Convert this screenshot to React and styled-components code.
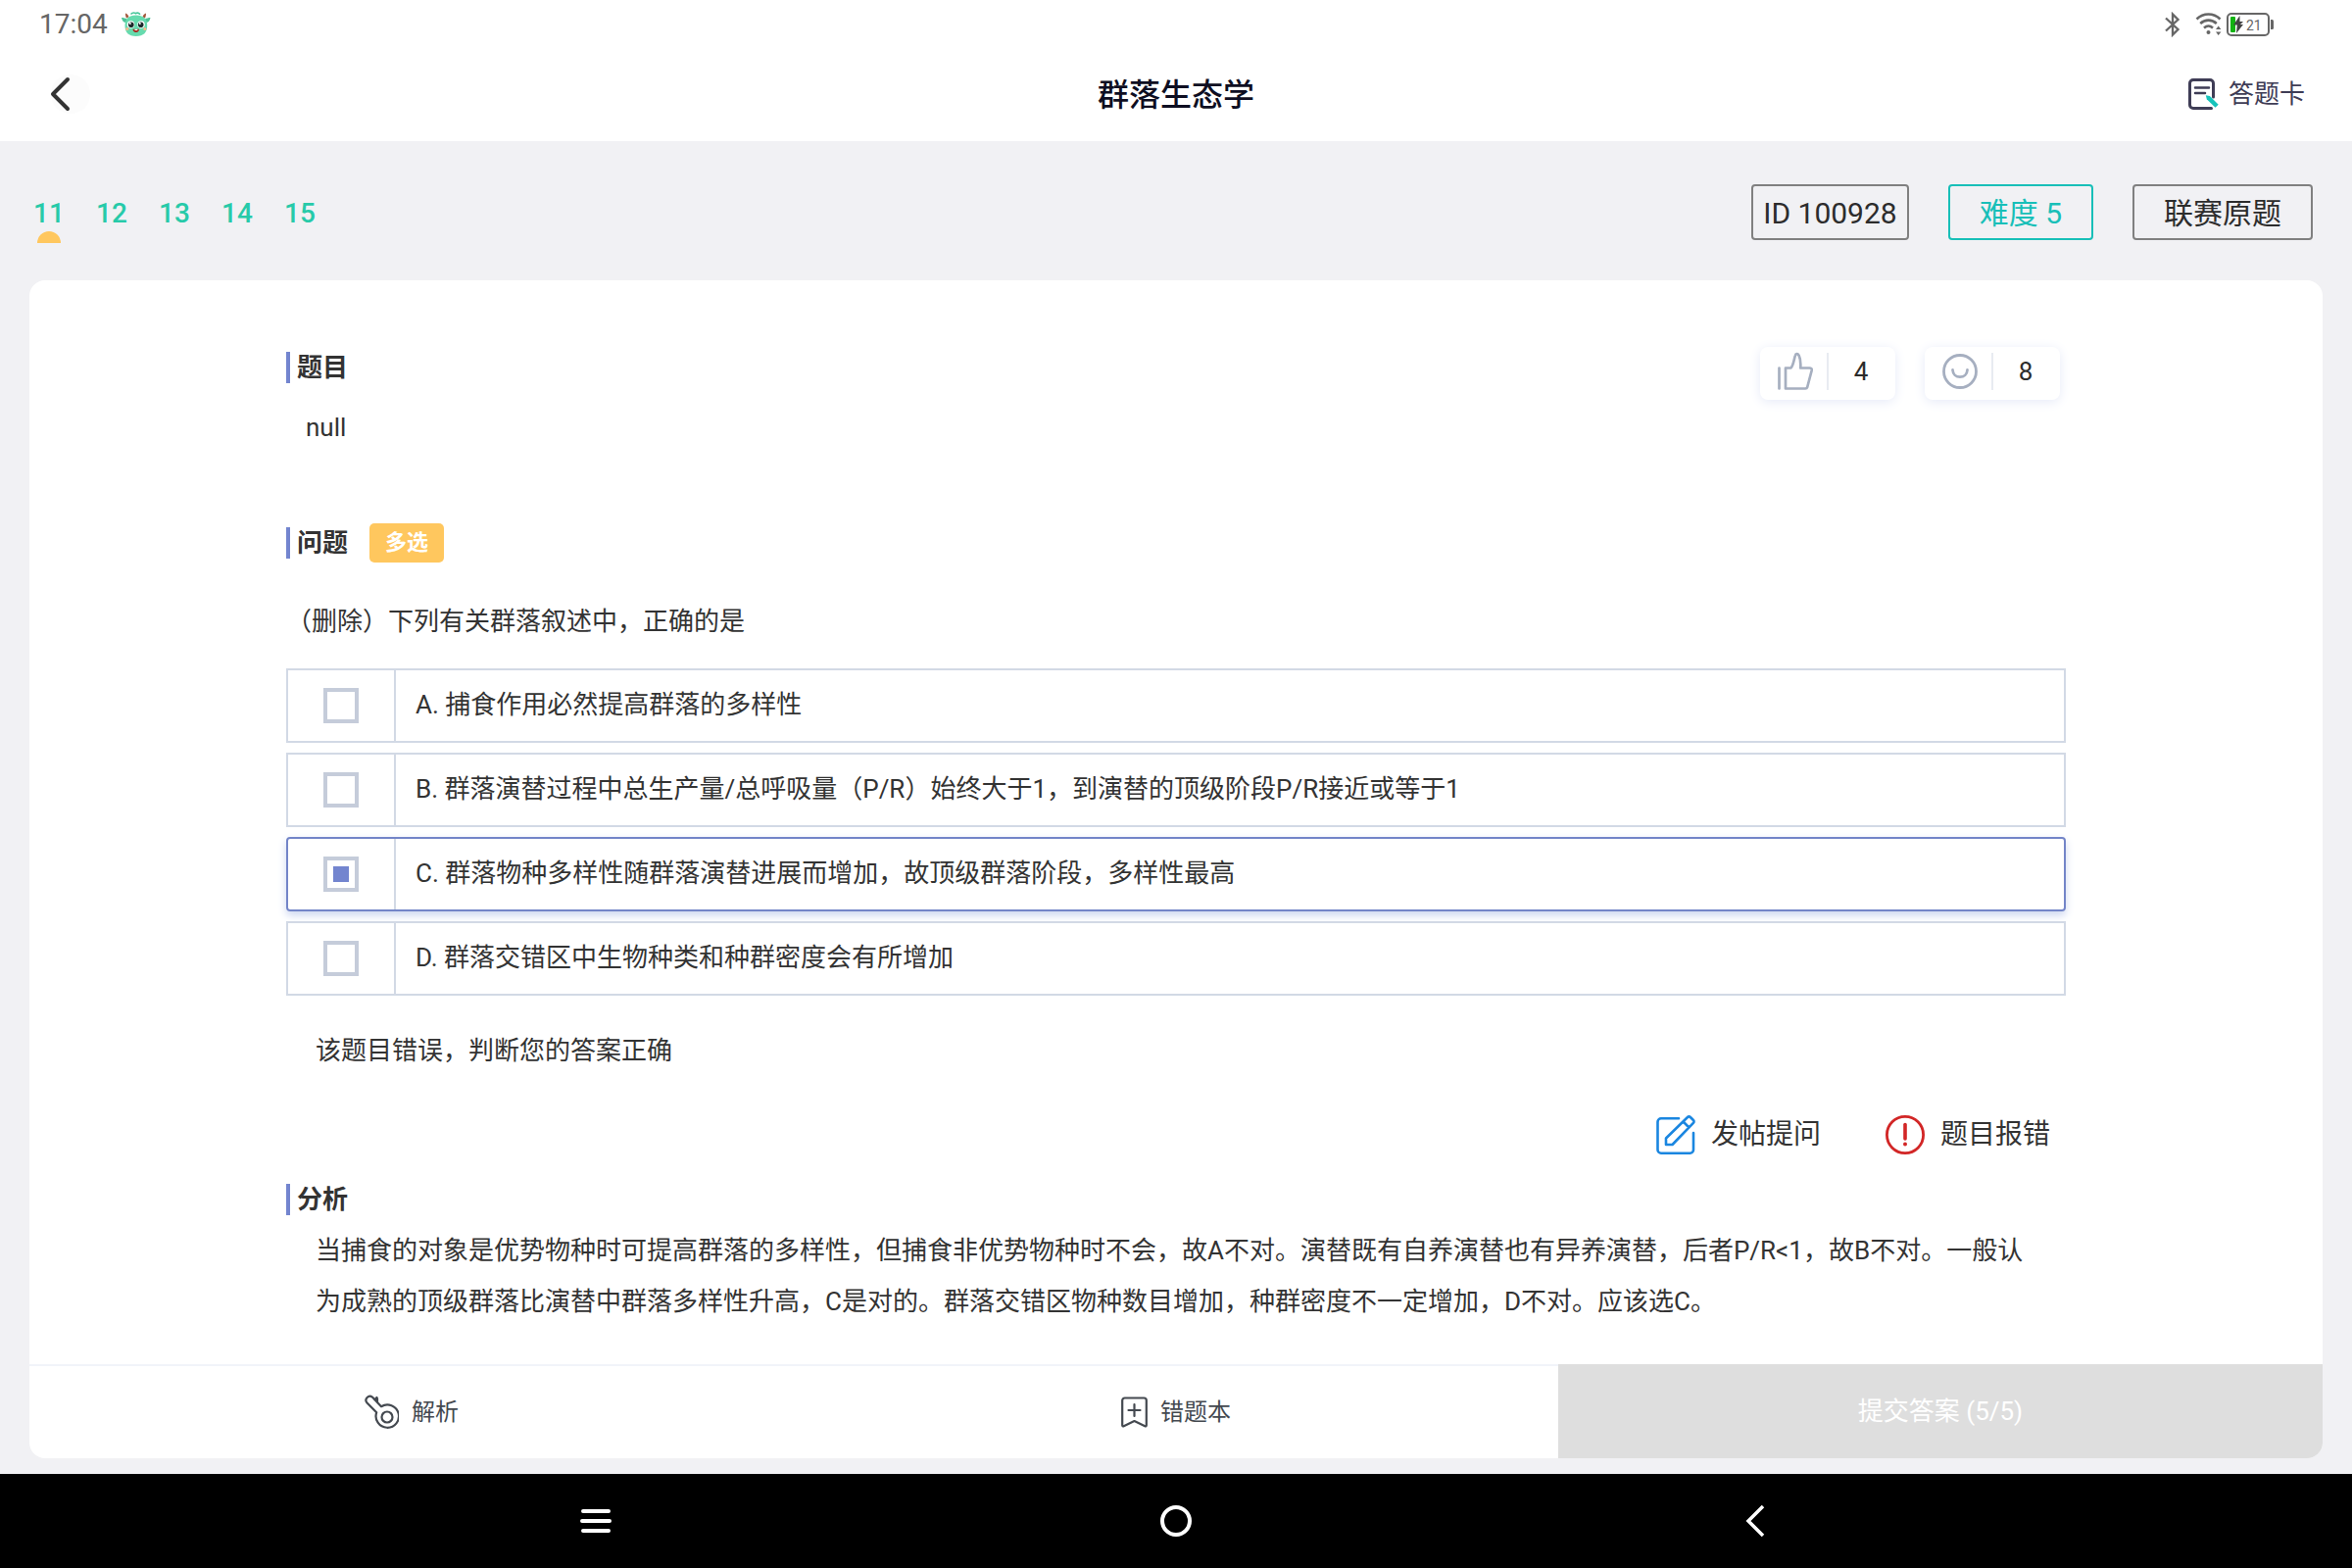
import React, { useState } from "react";
import styled, { createGlobalStyle } from "styled-components";

const GlobalStyle = createGlobalStyle`
  * {
    box-sizing: border-box;
  }
  body {
    margin: 0;
    color: #333333;
    background: #f1f1f4;
    font-family: Roboto, "Noto Sans CJK SC", sans-serif;
    font-size: 26px;
    line-height: 32px;
  }
  button {
    padding: 0;
    border: 0;
    background: none;
    color: inherit;
    font: inherit;
    cursor: pointer;
  }
  h1, h2, p {
    margin: 0;
    padding: 0;
  }
  svg {
    display: block;
    flex-shrink: 0;
  }
`;

const Page = styled.div`
  display: flex;
  flex-direction: column;
  min-height: 100vh;
`;
const StatusBar = styled.div`
  display: flex;
  align-items: center;
  justify-content: space-between;
  height: 48px;
  padding: 2px 80px 0 40px;
  background: #ffffff;
  color: #666666;
`;
const StatusGroup = styled.div`
  display: flex;
  align-items: center;
  gap: ${(props) => props.$gap};
`;
const Clock = styled.span`
  font-size: 28px;
`;
const Header = styled.header`
  display: grid;
  grid-template-columns: 1fr auto 1fr;
  align-items: center;
  height: 96px;
  padding: 0 48px;
  background: #ffffff;
`;
const BackBtn = styled.button`
  justify-self: start;
`;
const Title = styled.h1`
  padding-top: 2px;
  color: #0e0e22;
  font-size: 32px;
  font-weight: 500;
`;
const AnswerCardBtn = styled.button`
  display: flex;
  align-items: center;
  justify-self: end;
  gap: 8px;
  color: #3f3d56;
`;
const TopRow = styled.div`
  display: flex;
  align-items: center;
  justify-content: space-between;
  height: 142px;
  padding: 2px 40px 0 18px;
`;
const NumberNav = styled.nav`
  display: flex;
`;
const NumberBtn = styled.button`
  display: flex;
  flex-direction: column;
  align-items: center;
  width: 64px;
  height: 64px;
  padding-top: 18px;
  color: #27caa9;
  font-size: 28px;
  font-weight: 500;
  &::after {
    content: "";
    width: 24px;
    height: 12px;
    margin-top: 2px;
    border-radius: 12px 12px 0 0;
    background: ${(props) => (props.$active ? "#ffc75e" : "transparent")};
  }
`;
const TagList = styled.div`
  display: flex;
  gap: 40px;
`;
const Tag = styled.span`
  padding: 11px ${(props) => (props.$narrow ? "10px" : "30px")} 8px;
  border: 2px solid ${(props) => (props.$accent ? "#18bfb8" : "#808080")};
  border-radius: 4px;
  color: ${(props) => (props.$accent ? "#18bfb8" : "#2c2c2c")};
  font-size: 30px;
  line-height: 34px;
`;
const Card = styled.main`
  display: flex;
  flex: 1;
  flex-direction: column;
  margin: 0 30px 16px;
  border-radius: 16px;
  background: #ffffff;
  overflow: hidden;
`;
const Content = styled.div`
  flex: 1;
  padding: 68px 262px 0;
`;
const TopicHead = styled.div`
  display: flex;
  align-items: flex-start;
  justify-content: space-between;
  height: 54px;
  padding-right: 6px;
`;
const SectionHead = styled.div`
  display: flex;
  align-items: center;
  gap: 22px;
  margin-top: ${(props) => props.$top};
`;
const SectionTitle = styled.h2`
  padding-left: 7px;
  border-left: 4px solid #7385cf;
  font-size: 26px;
  font-weight: 700;
  line-height: 32px;
`;
const Feedback = styled.div`
  display: flex;
  gap: 30px;
`;
const FeedbackBtn = styled.button`
  display: flex;
  align-items: center;
  width: 138px;
  height: 54px;
  padding: 0 2px 4px 18px;
  border-radius: 8px;
  background: #ffffff;
  box-shadow: 0 2px 12px #e6eaf8;
  color: #2c2c2c;
`;
const FeedbackCount = styled.span`
  flex: 1;
  margin-left: 14px;
  border-left: 2px solid #e8ebf1;
  line-height: 38px;
`;
const TopicText = styled.p`
  padding: 12px 20px 0;
`;
const MultiBadge = styled.span`
  height: 40px;
  padding: 0 16px;
  border-radius: 5px;
  background: #ffc75e;
  color: #ffffff;
  font-size: 22px;
  font-weight: 700;
  line-height: 40px;
`;
const Question = styled.p`
  margin-top: 44px;
`;
const OptionList = styled.div`
  display: flex;
  flex-direction: column;
  gap: 10px;
  margin-top: 32px;
`;
const Option = styled.label`
  display: flex;
  align-items: center;
  height: 76px;
  border: 2px solid ${(props) => (props.$checked ? "#7385c8" : "#d2d9e5")};
  border-radius: ${(props) => (props.$checked ? "4px" : "0")};
  box-shadow: ${(props) => (props.$checked ? "0 4px 8px #ccd6f0" : "none")};
  cursor: pointer;
`;
const CheckCell = styled.span`
  display: flex;
  align-items: center;
  justify-content: center;
  width: 110px;
  height: 100%;
  border-right: 2px solid #d2d9e5;
`;
const Checkbox = styled.input`
  display: grid;
  place-content: center;
  width: 36px;
  height: 36px;
  margin: 0;
  border: 4px solid #c5ccda;
  background: #ffffff;
  appearance: none;
  cursor: pointer;
  &:checked::before {
    content: "";
    width: 16px;
    height: 16px;
    background: #7385cf;
  }
`;
const OptionText = styled.span`
  padding: 0 20px 2px;
`;
const ResultText = styled.p`
  margin-top: 40px;
  padding: 0 30px;
`;
const ActionRow = styled.div`
  display: flex;
  justify-content: flex-end;
  gap: 66px;
  margin-top: 50px;
  padding-right: 16px;
`;
const ActionBtn = styled.button`
  display: flex;
  align-items: center;
  gap: 16px;
  font-size: 28px;
`;
const Analysis = styled.p`
  padding: 10px 30px 0;
  line-height: 52px;
`;
const BottomBar = styled.div`
  display: grid;
  grid-template-columns: repeat(3, 1fr);
  height: 96px;
`;
const BottomBtn = styled.button`
  display: flex;
  align-items: center;
  justify-content: center;
  gap: 13px;
  border-top: 2px solid #f1f4f9;
  color: #444950;
  font-size: 24px;
`;
const SubmitBtn = styled.button`
  background: #dedede;
  color: #ffffff;
`;
const SystemNav = styled.nav`
  display: grid;
  grid-template-columns: repeat(3, 1fr);
  height: 96px;
  padding: 0 13%;
  background: #000000;
`;
const SystemBtn = styled.button`
  display: flex;
  align-items: center;
  justify-content: center;
`;

const MascotIcon = () => (
  <svg width="30" height="26" viewBox="0 0 30 26">
    <path d="M4 1.500c1.500.5 2.800 1.700 3.500 3.700L5 6.500C4.200 5 4 3.200 4 1.500zM25 1.500c-1.500.5-2.800 1.700-3.500 3.700L24 6.500c.8-1.500 1-3.300 1-5z" fill="#a3573a" />
    <path d="M0 6c2 0 4 .5 5.500 1.500L5 11C2 11 .5 9 0 6zM29.500 6c-2 0-4 .5-5.500 1.500l.5 3.500c3 0 4.500-2 5-5z" fill="#4fc498" />
    <path d="M14.800 3.500C7.500 3.500 3.500 7.500 3.500 14c0 7 3.500 11 11.300 11S26.200 21 26.200 14c0-6.500-4-10.500-11.400-10.500z" fill="#66dbae" />
    <path d="M9.500 2.500c2-2.200 3.500-1.800 5-.8 1.500-1 3-.8 4.500 1" fill="none" stroke="#43c698" strokeWidth="1.600" />
    <circle cx="9.500" cy="13" r="3.800" fill="#fff" />
    <circle cx="20" cy="13" r="3.800" fill="#fff" />
    <circle cx="9.800" cy="13.200" r="2.800" fill="#1d2b2b" />
    <circle cx="19.700" cy="13.200" r="2.800" fill="#1d2b2b" />
    <circle cx="8.800" cy="12" r="1" fill="#fff" />
    <circle cx="18.800" cy="12" r="1" fill="#fff" />
    <circle cx="5.800" cy="17.500" r="1.500" fill="#ffb98a" />
    <circle cx="23.800" cy="17.500" r="1.500" fill="#ffb98a" />
    <path d="M11.500 17.800h6.500c0 2-1 3.200-3.200 3.200s-3.300-1.200-3.300-3.200z" fill="#a62a20" />
    <path d="M13.500 17.800h2.800v1.200h-2.800z" fill="#fff" />
  </svg>
);
const BluetoothIcon = () => (
  <svg width="18" height="26" viewBox="0 0 18 26" fill="none" stroke="currentColor" strokeWidth="2.300">
    <path d="M2 6.500 14.500 18 9 23.500V2.500L14.500 8 2 19.500" />
  </svg>
);
const WifiIcon = () => (
  <svg width="28" height="26" viewBox="0 0 28 26" fill="none" stroke="currentColor" strokeWidth="2.600">
    <path d="M1.500 7.500C8.500.8 18.500.8 25.500 7.500M5.200 12c5-4.500 11.600-4.500 16.600 0M9 16.500c2.800-2.500 6.200-2.500 9 0" />
    <circle cx="13.500" cy="21" r="2" fill="currentColor" stroke="none" />
    <path d="m21 18 2.700-3.500 2.700 3.500zM21 20.500l2.700 3.500 2.700-3.500z" fill="currentColor" stroke="none" />
  </svg>
);
const BatteryIcon = () => (
  <svg width="48" height="24" viewBox="0 0 48 24">
    <rect x="1" y="1" width="42" height="22" rx="4" fill="none" stroke="currentColor" strokeWidth="2" />
    <path d="M45 7h1.500a1.500 1.500 0 0 1 1.500 1.500v7a1.500 1.500 0 0 1-1.500 1.500H45z" fill="currentColor" />
    <rect x="4" y="4" width="5" height="16" rx="1" fill="#12b312" />
    <path d="m13.500 3-6.500 9.500h3.800L10 21l7-9h-3L17 9h-3.500z" fill="#444" />
    <text x="20" y="18" fontSize="14" fill="currentColor">21</text>
  </svg>
);
const BackIcon = () => (
  <svg width="44" height="40" viewBox="4 0 44 40">
    <circle cx="28" cy="20" r="20" fill="#fcfcfc" />
    <path d="M25 5 10 20l15 15" fill="none" stroke="#333" strokeWidth="4" strokeLinecap="round" strokeLinejoin="round" />
  </svg>
);
const AnswerCardIcon = () => (
  <svg width="33" height="32" viewBox="0 0 33 32" fill="none" strokeLinecap="round">
    <path d="M25.500 19V5a3.500 3.500 0 0 0-3.500-3.500H5A3.500 3.500 0 0 0 1.500 5v22A3.500 3.500 0 0 0 5 30.500h18.500" stroke="#3f3d56" strokeWidth="3" />
    <path d="M7 9.500h14M7 15h10" stroke="#3f3d56" strokeWidth="2.500" />
    <path d="m17.800 17.200 1 4 8.700 8.600 3.200-3-8.800-8.800z" fill="#17c3bb" />
  </svg>
);
const LikeIcon = () => (
  <svg width="36" height="40" viewBox="0 0 36 40" fill="none" stroke="#a6afc0" strokeWidth="2.700" strokeLinecap="round" strokeLinejoin="round">
    <path d="M1.500 16.500v21M8 16.500h5.500c2.500-3 3-8 4.300-12.500.6-2.300 2.600-2.500 3.800-.3 1.500 3 2 7.500 1.600 12.800h9.300c1.500 0 2.500 1 2.200 2.500l-4.500 17c-.3 1-1 1.500-2 1.500H8z" />
  </svg>
);
const SmileIcon = () => (
  <svg width="36" height="36" viewBox="0 0 36 36" fill="none" stroke="#a6afc0" strokeWidth="2.800" strokeLinecap="round">
    <circle cx="18" cy="18" r="16.500" />
    <path d="M10.500 16.500c.3 4.500 3.500 7.200 7.500 7.200s7.200-2.700 7.500-7.200" />
  </svg>
);
const PostIcon = () => (
  <svg width="40" height="40" viewBox="0 0 40 40" fill="none" stroke="#1a86e0" strokeWidth="2.600" strokeLinecap="round" strokeLinejoin="round">
    <path d="M23 3.300H5A3.500 3.500 0 0 0 1.500 6.800v28.400A3.500 3.500 0 0 0 5 38.700h29.500a3.500 3.500 0 0 0 3.500-3.500V18" />
    <path d="M10 23.500 32 2a2 2 0 0 1 2.900 0l3 3a2 2 0 0 1 0 2.900L16.500 30H10zM27.500 6.500l6 6" />
  </svg>
);
const ReportIcon = () => (
  <svg width="40" height="40" viewBox="0 0 40 40" fill="none" stroke="#d22626" strokeLinecap="round">
    <circle cx="20" cy="20" r="18.600" strokeWidth="2.800" />
    <path d="M20 9.500V24" strokeWidth="3.600" />
    <circle cx="20" cy="29.500" r="2" fill="#d22626" stroke="none" />
  </svg>
);
const KeyIcon = () => (
  <svg width="35" height="36" viewBox="0 0 35 36" fill="none" stroke="currentColor" strokeWidth="2.200" strokeLinecap="round" strokeLinejoin="round">
    <path d="M12.200 18.300 2.300 8.200a4 4 0 0 1 5.600-5.600L17 12.200a11.700 11.700 0 1 1-4.800 6.100z" />
    <circle cx="23" cy="23" r="5.500" />
    <path d="m10.500 5 2-2M13 7.500V4" />
  </svg>
);
const WrongBookIcon = () => (
  <svg width="27" height="32" viewBox="0 0 27 32" fill="none" stroke="currentColor" strokeWidth="2.200" strokeLinecap="round" strokeLinejoin="round">
    <path d="M1.200 29.500V4a2.500 2.500 0 0 1 2.500-2.500h19.600A2.500 2.500 0 0 1 25.800 4v25.500c0 .8-.8 1.200-1.500.8L13.500 25 2.700 30.300c-.7.4-1.500 0-1.500-.8z" />
    <path d="M13.500 8v12M7.500 14h12" />
  </svg>
);

const numbers = [11, 12, 13, 14, 15];
const options = [
  { id: "A", text: "捕食作用必然提高群落的多样性" },
  {
    id: "B",
    text: "群落演替过程中总生产量/总呼吸量（P/R）始终大于1，到演替的顶级阶段P/R接近或等于1",
  },
  { id: "C", text: "群落物种多样性随群落演替进展而增加，故顶级群落阶段，多样性最高" },
  { id: "D", text: "群落交错区中生物种类和种群密度会有所增加" },
];

export default function App() {
  const [current, setCurrent] = useState(11);
  const [checked, setChecked] = useState(["C"]);

  const toggleOption = (id) => {
    setChecked((prev) =>
      prev.includes(id) ? prev.filter((item) => item !== id) : [...prev, id]
    );
  };

  return (
    <Page>
      <GlobalStyle />
      <StatusBar>
        <StatusGroup $gap="14px">
          <Clock>17:04</Clock>
          <MascotIcon />
        </StatusGroup>
        <StatusGroup $gap="4px">
          <StatusGroup $gap="14px">
            <BluetoothIcon />
            <WifiIcon />
          </StatusGroup>
          <BatteryIcon />
        </StatusGroup>
      </StatusBar>
      <Header>
        <BackBtn aria-label="返回">
          <BackIcon />
        </BackBtn>
        <Title>群落生态学</Title>
        <AnswerCardBtn>
          <AnswerCardIcon />
          答题卡
        </AnswerCardBtn>
      </Header>
      <TopRow>
        <NumberNav>
          {numbers.map((num) => (
            <NumberBtn
              key={num}
              $active={num === current}
              onClick={() => setCurrent(num)}
            >
              {num}
            </NumberBtn>
          ))}
        </NumberNav>
        <TagList>
          <Tag $narrow>ID 100928</Tag>
          <Tag $accent>难度 5</Tag>
          <Tag>联赛原题</Tag>
        </TagList>
      </TopRow>
      <Card>
        <Content>
          <TopicHead>
            <SectionHead $top="5px">
              <SectionTitle>题目</SectionTitle>
            </SectionHead>
            <Feedback>
              <FeedbackBtn aria-label="点赞 4">
                <LikeIcon />
                <FeedbackCount>4</FeedbackCount>
              </FeedbackBtn>
              <FeedbackBtn aria-label="笑脸 8">
                <SmileIcon />
                <FeedbackCount>8</FeedbackCount>
              </FeedbackBtn>
            </Feedback>
          </TopicHead>
          <TopicText>null</TopicText>
          <SectionHead $top="82px">
            <SectionTitle>问题</SectionTitle>
            <MultiBadge>多选</MultiBadge>
          </SectionHead>
          <Question>（删除）下列有关群落叙述中，正确的是</Question>
          <OptionList>
            {options.map((option) => {
              const isChecked = checked.includes(option.id);
              return (
                <Option key={option.id} $checked={isChecked}>
                  <CheckCell>
                    <Checkbox
                      type="checkbox"
                      checked={isChecked}
                      onChange={() => toggleOption(option.id)}
                    />
                  </CheckCell>
                  <OptionText>
                    {option.id}. {option.text}
                  </OptionText>
                </Option>
              );
            })}
          </OptionList>
          <ResultText>该题目错误，判断您的答案正确</ResultText>
          <ActionRow>
            <ActionBtn>
              <PostIcon />
              发帖提问
            </ActionBtn>
            <ActionBtn>
              <ReportIcon />
              题目报错
            </ActionBtn>
          </ActionRow>
          <SectionHead $top="30px">
            <SectionTitle>分析</SectionTitle>
          </SectionHead>
          <Analysis>
            当捕食的对象是优势物种时可提高群落的多样性，但捕食非优势物种时不会，故A不对。演替既有自养演替也有异养演替，后者P/R&lt;1，故B不对。一般认为成熟的顶级群落比演替中群落多样性升高，C是对的。群落交错区物种数目增加，种群密度不一定增加，D不对。应该选C。
          </Analysis>
        </Content>
        <BottomBar>
          <BottomBtn>
            <KeyIcon />
            解析
          </BottomBtn>
          <BottomBtn>
            <WrongBookIcon />
            错题本
          </BottomBtn>
          <SubmitBtn>提交答案 (5/5)</SubmitBtn>
        </BottomBar>
      </Card>
      <SystemNav>
        <SystemBtn aria-label="菜单">
          <svg width="32" height="32" viewBox="0 0 32 32" stroke="#fff" strokeWidth="4" strokeLinecap="round">
            <path d="M3 6h26M2 16h28M3 26h26" />
          </svg>
        </SystemBtn>
        <SystemBtn aria-label="主页">
          <svg width="32" height="32" viewBox="0 0 32 32" fill="none" stroke="#fff" strokeWidth="4">
            <circle cx="16" cy="16" r="14" />
          </svg>
        </SystemBtn>
        <SystemBtn aria-label="后退">
          <svg width="32" height="32" viewBox="0 0 32 32" fill="none" stroke="#fff" strokeWidth="3.500">
            <path d="M23 1 8 16l15 15" />
          </svg>
        </SystemBtn>
      </SystemNav>
    </Page>
  );
}
